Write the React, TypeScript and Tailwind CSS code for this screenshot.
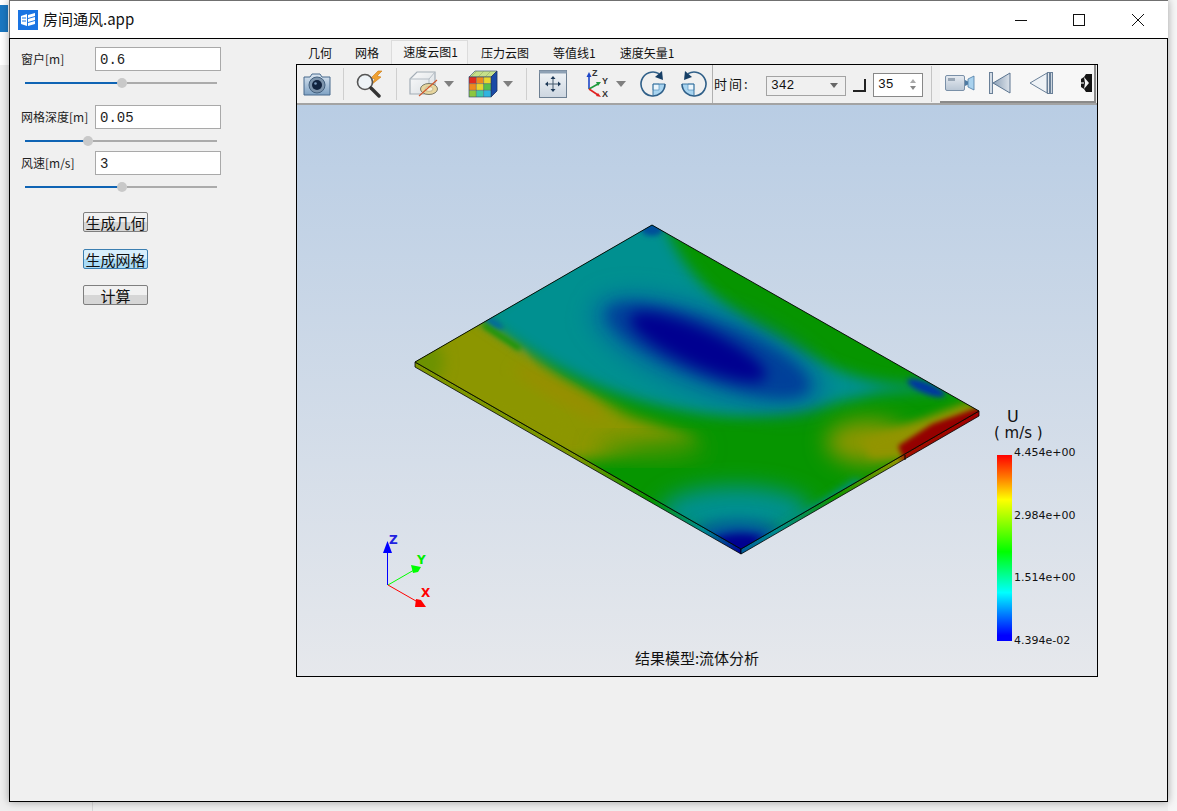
const cjk = '"Noto Sans CJK SC", "Liberation Sans", sans-serif'

function Slider({ fill, rest }: { fill: string; rest: string }) {
  return (
    <div className="ml-[15px] mt-[7px] flex h-[10px] w-[192px] items-center">
      <div className={`h-[2px] bg-[#0f64b4] ${fill}`} />
      <div className="-ml-[5px] h-[10px] w-[10px] shrink-0 rounded-full bg-[#c9c9c9]" />
      <div className={`h-[2px] bg-[#ababab] ${rest}`} />
    </div>
  )
}

function Field({ label, value }: { label: string; value: string }) {
  return (
    <div className="flex h-[24px] items-center pl-[11px]">
      <span className="w-[74px] text-[12px] leading-none whitespace-nowrap text-[#222]">{label}</span>
      <div className="flex h-[24px] w-[126px] items-center border border-[#a9a9a9] bg-white pt-[2px] pl-[4px] font-['Liberation_Mono',monospace] text-[14px] text-[#222] whitespace-pre">
        {value}
      </div>
    </div>
  )
}

function QtButton({ text, active }: { text: string; active?: boolean }) {
  return (
    <button
      className={`flex h-[20px] w-[65px] items-center justify-center rounded-[2px] border text-[15px] leading-none text-[#111] ${
        active
          ? 'border-[#3c7fb1] bg-[linear-gradient(#d8effc_50%,#a9dbf6_50%)]'
          : 'border-[#7f7f7f] bg-[linear-gradient(#f1f1f1_50%,#d6d6d6_50%)]'
      }`}
    >
      {text}
    </button>
  )
}

function Sep({ ml, mr }: { ml: string; mr: string }) {
  return <div className={`h-[32px] w-px shrink-0 bg-[#cfcfcf] ${ml} ${mr}`} />
}

function Arrow({ cls }: { cls: string }) {
  return <div className={`h-0 w-0 shrink-0 border-x-[5px] border-t-[6px] border-x-transparent border-t-[#7f7f7f] ${cls}`} />
}

function CameraIcon() {
  return (
    <svg width="30" height="26" viewBox="0 0 30 26" className="shrink-0">
      <defs>
        <linearGradient id="camBody" x1="0" y1="0" x2="0" y2="1">
          <stop offset="0" stopColor="#dbe6f1" />
          <stop offset="1" stopColor="#7fa2c4" />
        </linearGradient>
      </defs>
      <path d="M2 6h6l2-3h8l2 3h8v18H2z" fill="url(#camBody)" stroke="#47698c" />
      <circle cx="15" cy="14" r="8" fill="#7d94ac" stroke="#43607e" />
      <circle cx="15" cy="14" r="5" fill="#12243f" />
      <circle cx="13.5" cy="12.5" r="1.3" fill="#7a98bb" />
    </svg>
  )
}

function SearchBoltIcon() {
  return (
    <svg width="30" height="28" viewBox="0 0 30 28" className="shrink-0">
      <path d="M23 1l-7 7 4 1-4 6 10-8-4-1 5-5z" fill="#f0a030" stroke="#c97a14" strokeWidth="0.6" />
      <circle cx="10" cy="12" r="7.5" fill="#eef3f7" stroke="#555" strokeWidth="1.6" />
      <path d="M16 18l8 8" stroke="#333" strokeWidth="3.4" strokeLinecap="round" />
    </svg>
  )
}

function CutCubeIcon() {
  return (
    <svg width="30" height="26" viewBox="0 0 30 26" className="shrink-0">
      <defs>
        <linearGradient id="cubeFace" x1="0" y1="0" x2="1" y2="1">
          <stop offset="0" stopColor="#fbfbfb" />
          <stop offset="1" stopColor="#d8dde2" />
        </linearGradient>
      </defs>
      <path d="M1 8l7-7h18v15l-6 7H1z" fill="url(#cubeFace)" stroke="#a3adb6" strokeWidth="1.2" />
      <path d="M1 8h19v15M20 8l6-7" fill="none" stroke="#b4bcc4" />
      <ellipse cx="20" cy="18" rx="8.5" ry="5.5" fill="#e8d69e" stroke="#7a7a6a" />
      <ellipse cx="20" cy="18" rx="4" ry="2.4" fill="#f7f0d6" stroke="#a89c70" strokeWidth="0.6" />
      <path d="M10 25L28 9" stroke="#d0562a" strokeWidth="1.2" />
    </svg>
  )
}

function ColorCubeIcon() {
  return (
    <svg width="30" height="28" viewBox="0 0 30 28" className="shrink-0">
      <path d="M1 7l6-6h22l-6 6z" fill="#c6e08a" stroke="#28406c" strokeWidth="0.6" />
      <path d="M9 1l-6 6M16 1l-6 6M23 1l-6 6" stroke="#8aa05c" strokeWidth="0.5" />
      <path d="M23 7l6-6v20l-6 6z" fill="#1a4aa6" stroke="#1d3360" strokeWidth="0.8" />
      <rect x="1" y="7" width="7.3" height="6.6" fill="#e22c20" />
      <rect x="8.3" y="7" width="7.3" height="6.6" fill="#ee8a1e" />
      <rect x="15.6" y="7" width="7.4" height="6.6" fill="#e8d62e" />
      <rect x="1" y="13.6" width="7.3" height="6.7" fill="#ee8a1e" />
      <rect x="8.3" y="13.6" width="7.3" height="6.7" fill="#e8d62e" />
      <rect x="15.6" y="13.6" width="7.4" height="6.7" fill="#58c04a" />
      <rect x="1" y="20.3" width="7.3" height="6.7" fill="#8cc63f" />
      <rect x="8.3" y="20.3" width="7.3" height="6.7" fill="#3cc8a8" />
      <rect x="15.6" y="20.3" width="7.4" height="6.7" fill="#30b4e0" />
      <path d="M8.3 7v20M15.6 7v20M1 13.6h22M1 20.3h22" stroke="#40506a" strokeWidth="0.5" />
      <rect x="1" y="7" width="22" height="20" fill="none" stroke="#28406c" strokeWidth="0.6" />
    </svg>
  )
}

function MoveIcon() {
  return (
    <svg width="28" height="28" viewBox="0 0 28 28" className="shrink-0">
      <defs>
        <linearGradient id="moveBg" x1="0" y1="0" x2="0" y2="1">
          <stop offset="0" stopColor="#f2f5f8" />
          <stop offset="1" stopColor="#cdd6e0" />
        </linearGradient>
      </defs>
      <rect x="0.5" y="0.5" width="27" height="27" fill="url(#moveBg)" stroke="#6d7f92" />
      <rect x="0.5" y="0.5" width="27" height="3" fill="#8ea1b5" />
      <path d="M14 8v12M8 14h12" stroke="#44586c" strokeWidth="1" />
      <path d="M14 6l-2.5 3h5zM14 22l-2.5-3h5zM6 14l3-2.5v5zM22 14l-3-2.5v5z" fill="#1f3a58" />
    </svg>
  )
}

function AxesIcon() {
  return (
    <svg width="26" height="30" viewBox="0 0 26 30" className="shrink-0">
      <path d="M5 20V6" stroke="#1d46c8" strokeWidth="1.6" />
      <path d="M5 3l-2.5 5h5z" fill="#1d46c8" />
      <path d="M5 20l9-5" stroke="#1e9a3c" strokeWidth="1.6" />
      <path d="M17 13l-5 0 2 4z" fill="#1e9a3c" />
      <path d="M5 20l9 6" stroke="#e02020" strokeWidth="1.6" />
      <path d="M17 28l-5-1 2-3z" fill="#e02020" />
      <text x="8" y="7" fontSize="9" fontWeight="bold" fill="#333" fontFamily="Liberation Sans">Z</text>
      <text x="18" y="15" fontSize="9" fontWeight="bold" fill="#333" fontFamily="Liberation Sans">Y</text>
      <text x="18" y="28" fontSize="9" fontWeight="bold" fill="#333" fontFamily="Liberation Sans">X</text>
    </svg>
  )
}

function RotateIcon({ flip }: { flip?: boolean }) {
  return (
    <svg width="28" height="28" viewBox="0 0 28 28" className={`shrink-0 ${flip ? '-scale-x-100' : ''}`}>
      <path d="M14 14h12a12 12 0 0 1-12 12z" fill="#a8d4f0" />
      <path d="M14 14h6v6h-6z" fill="#eaf5fc" stroke="#5a92bd" strokeWidth="0.7" />
      <path d="M14 14h12M14 14v12" stroke="#2f6c99" strokeWidth="0.9" />
      <path d="M20 3.6A12 12 0 1 0 26 14" fill="none" stroke="#2f5f88" strokeWidth="1.6" />
      <path d="M23 1l1 9-8-3z" fill="#173f66" />
    </svg>
  )
}

function VideoIcon() {
  return (
    <svg width="30" height="18" viewBox="0 0 30 18" className="shrink-0">
      <defs>
        <linearGradient id="vidBody" x1="0" y1="0" x2="0" y2="1">
          <stop offset="0" stopColor="#e6ebf1" />
          <stop offset="1" stopColor="#b9c6d4" />
        </linearGradient>
      </defs>
      <rect x="0.5" y="1.5" width="19" height="15" rx="1.5" fill="url(#vidBody)" stroke="#7a90a8" />
      <rect x="3" y="4" width="7" height="3" fill="#98a6b5" />
      <path d="M20 6l3 1.5v3L20 12z" fill="#4e7ba3" />
      <path d="M23 5l6-3v14l-6-3z" fill="#a9d2ee" stroke="#4e7ba3" strokeWidth="0.8" />
    </svg>
  )
}

function FirstIcon() {
  return (
    <svg width="22" height="22" viewBox="0 0 22 22" className="shrink-0">
      <defs>
        <linearGradient id="firstFill" x1="0" y1="0" x2="1" y2="0">
          <stop offset="0" stopColor="#8ca0b6" />
          <stop offset="1" stopColor="#dbe2ea" />
        </linearGradient>
      </defs>
      <rect x="0.5" y="0.5" width="3" height="21" fill="#d4dce5" stroke="#6a8098" />
      <path d="M21 1v20L4 11z" fill="url(#firstFill)" stroke="#5c7590" />
    </svg>
  )
}

function PrevIcon() {
  return (
    <svg width="24" height="22" viewBox="0 0 24 22" className="shrink-0">
      <path d="M18 1v20L1 11z" fill="#eef2f6" stroke="#6a8098" />
      <rect x="18.5" y="0.5" width="2" height="21" fill="#e3e8ee" stroke="#6a8098" />
      <rect x="21.5" y="0.5" width="2" height="21" fill="#cdd6df" stroke="#6a8098" />
    </svg>
  )
}

function CutOffIcon() {
  return (
    <svg width="11" height="18" viewBox="0 0 11 18" className="shrink-0">
      <path d="M0 5l3-2 2-3h6v18H5l-2-3-3-2z" fill="#151515" />
      <path d="M3 3l5 6-5 6 1-6z" fill="#f4f4f4" />
      <path d="M0 8h3v2H0z" fill="#9a9a9a" />
    </svg>
  )
}

function Plate() {
  return (
    <svg viewBox="297 105 800 571" className="absolute inset-0 h-full w-full">
      <defs>
        <clipPath id="plateClip">
          <polygon points="652,225 979,411 741,549 415,362" />
        </clipPath>
        <filter id="b2" x="-50%" y="-50%" width="200%" height="200%"><feGaussianBlur stdDeviation="2.5" /></filter>
        <filter id="b4" x="-50%" y="-50%" width="200%" height="200%"><feGaussianBlur stdDeviation="4" /></filter>
        <filter id="b7" x="-50%" y="-50%" width="200%" height="200%"><feGaussianBlur stdDeviation="7" /></filter>
        <filter id="b11" x="-50%" y="-50%" width="200%" height="200%"><feGaussianBlur stdDeviation="11" /></filter>
        <linearGradient id="sideLeft" gradientUnits="userSpaceOnUse" x1="415" y1="367" x2="741" y2="554">
          <stop offset="0" stopColor="#7f9600" />
          <stop offset="0.5" stopColor="#7a9600" />
          <stop offset="0.72" stopColor="#089400" />
          <stop offset="0.88" stopColor="#008c90" />
          <stop offset="1" stopColor="#000098" />
        </linearGradient>
        <linearGradient id="sideRight" gradientUnits="userSpaceOnUse" x1="741" y1="554" x2="979" y2="416">
          <stop offset="0" stopColor="#005a9a" />
          <stop offset="0.15" stopColor="#008c90" />
          <stop offset="0.4" stopColor="#109400" />
          <stop offset="0.66" stopColor="#8c9600" />
          <stop offset="0.7" stopColor="#a01000" />
          <stop offset="1" stopColor="#a00000" />
        </linearGradient>
      </defs>

      {/* thin side of the slab */}
      <polygon points="415,362 415,367 741,554 741,549" fill="url(#sideLeft)" stroke="#000" strokeWidth="0.8" />
      <polygon points="741,549 741,554 979,416 979,411" fill="url(#sideRight)" stroke="#000" strokeWidth="0.8" />

      {/* velocity field on the top face */}
      <g clipPath="url(#plateClip)">
        <rect x="400" y="215" width="600" height="345" fill="#069500" />
        <path d="M690,232 L830,315" stroke="#4a9400" strokeWidth="6" filter="url(#b4)" />
        <polygon points="400,350 486,316 560,376 630,416 700,440 640,448 600,458 570,462 400,385" fill="#8c9600" filter="url(#b7)" />
        <polygon points="405,362 486,322 525,350 575,440 470,395" fill="#8c9600" filter="url(#b2)" />
        <ellipse cx="650" cy="448" rx="55" ry="10" fill="#4c9400" filter="url(#b11)" />
        <circle cx="420" cy="362" r="24" fill="#6c9200" filter="url(#b7)" />
        <ellipse cx="560" cy="392" rx="52" ry="8" transform="rotate(30 560 392)" fill="#988e00" filter="url(#b7)" />
        <path
          d="M478,316 C540,360 600,398 690,412 C760,424 830,404 880,393 L965,388 L925,382 C880,392 820,366 762,332 C722,306 680,270 666,226 L640,212 Z"
          fill="#009090"
          filter="url(#b7)"
        />
        <ellipse cx="708" cy="351" rx="124" ry="42" transform="rotate(20 708 351)" fill="#00709c" filter="url(#b11)" />
        <ellipse cx="708" cy="350" rx="108" ry="30" transform="rotate(21 708 350)" fill="#00409a" filter="url(#b7)" />
        <ellipse cx="698" cy="347" rx="74" ry="19" transform="rotate(24 698 347)" fill="#000090" filter="url(#b7)" />
        <ellipse cx="736" cy="512" rx="76" ry="26" fill="#009090" filter="url(#b11)" />
        <ellipse cx="738" cy="538" rx="48" ry="18" fill="#005a9c" filter="url(#b7)" />
        <ellipse cx="741" cy="545" rx="32" ry="12" fill="#000090" filter="url(#b4)" />
        <path d="M760,548 L860,482" stroke="#009090" strokeWidth="10" filter="url(#b4)" />
        <ellipse cx="868" cy="442" rx="42" ry="22" fill="#8c9600" filter="url(#b11)" />
        <polygon points="862,440 925,418 968,402 985,411 905,458 870,458" fill="#929400" filter="url(#b4)" />
        <polygon points="898,446 932,424 985,405 985,415 905,462" fill="#940000" filter="url(#b2)" />
        <ellipse cx="652" cy="229" rx="11" ry="7" fill="#00509a" filter="url(#b2)" />
        <ellipse cx="494" cy="323" rx="11" ry="3.5" transform="rotate(30 494 323)" fill="#0068a0" filter="url(#b2)" />
        <path d="M483,325 L520,349" stroke="#069500" strokeWidth="4" filter="url(#b2)" />
        <ellipse cx="926" cy="388" rx="20" ry="5.5" transform="rotate(22 926 388)" fill="#0038a0" filter="url(#b2)" />
      </g>
      <polygon points="652,225 979,411 741,549 415,362" fill="none" stroke="#000" strokeWidth="0.9" />
      <path d="M905,455v5" stroke="#000" />

      {/* triad */}
      <path d="M387.5 585V550" stroke="#0000ff" strokeWidth="1" />
      <path d="M387.5 541l-4.5 12h9z" fill="#0000ff" />
      <path d="M388 585l26-15" stroke="#00ff00" />
      <path d="M421 567l-10-2 2 8 5-1z" fill="#00ff00" />
      <path d="M388 585l28 16" stroke="#ff0000" />
      <path d="M426 607l-11 0 1-8 5 1z" fill="#ff0000" />
      <text x="389" y="544" fontSize="12" fontWeight="bold" fill="#2222e0" fontFamily="DejaVu Sans">Z</text>
      <text x="417" y="564" fontSize="12" fontWeight="bold" fill="#00ee00" fontFamily="DejaVu Sans">Y</text>
      <text x="421" y="597" fontSize="12" fontWeight="bold" fill="#ff0000" fontFamily="DejaVu Sans">X</text>
    </svg>
  )
}

function Legend() {
  return (
    <div className="absolute top-[303px] left-[693px] w-[90px] font-['DejaVu_Sans',sans-serif] text-[#111]">
      <div className="pl-[17px] text-[16px] leading-[17px] font-medium">U</div>
      <div className="pl-[4px] text-[15px] leading-[17px] whitespace-nowrap">( m/s )</div>
      <div className="mt-[13px] flex h-[186px] items-stretch">
        <div className="ml-[7px] w-[15px] bg-[linear-gradient(#ff0000_0%,#ff7a00_12%,#ffff00_24%,#00ff00_52%,#00ffff_74%,#0078ff_86%,#0000ff_97%)]" />
        <div className="-mt-[10px] -mb-[8px] flex flex-col justify-between pl-[2px] text-[11px] leading-[16px]">
          <span>4.454e+00</span>
          <span>2.984e+00</span>
          <span>1.514e+00</span>
          <span>4.394e-02</span>
        </div>
      </div>
    </div>
  )
}

export default function App() {
  return (
    <div
      className="relative h-[811px] w-[1177px] overflow-hidden bg-[#efefef]"
      style={{ fontFamily: cjk }}
    >
      {/* app behind the window */}
      <div className="absolute top-0 left-0 h-[65px] w-[10px] bg-white">
        <div className="mt-[5px] h-[27px] w-[8px] bg-[#1b78c2]" />
      </div>
      <div className="absolute top-[800px] left-[92px] h-[11px] w-px bg-[#d8d8d8]" />
      <div className="absolute top-0 left-[1168px] h-[811px] w-[9px] bg-[#f6f6f6]" />

      <div className="relative ml-[9px] flex h-[802px] w-[1159px] flex-col shadow-[0_0_8px_rgba(0,0,0,0.35)]">
        {/* title bar */}
        <div className="flex h-[38px] shrink-0 items-center border-t border-l border-[#707070] bg-white">
          <svg width="20" height="20" viewBox="0 0 20 20" className="ml-[8px] shrink-0">
            <rect width="20" height="20" fill="#1a74e2" />
            <path d="M3 6l6-2v12l-6-2zM10 5l7-2v3l-7 2zM10 9l7-2v3l-7 2zM10 13l7-2v3l-7 2z" fill="#fff" />
            <path d="M4 8h4M4 11h4" stroke="#1a74e2" />
          </svg>
          <span className="ml-[5px] text-[15px] text-[#111]">房间通风.app</span>
          <div className="ml-auto flex items-center">
            <svg width="12" height="12" viewBox="0 0 12 12" className="mr-[46px]"><path d="M0 6.5h12" stroke="#111" /></svg>
            <svg width="12" height="12" viewBox="0 0 12 12" className="mr-[47px]"><rect x="0.5" y="0.5" width="11" height="11" fill="none" stroke="#111" /></svg>
            <svg width="12" height="12" viewBox="0 0 12 12" className="mr-[24px]"><path d="M0 0l12 12M12 0L0 12" stroke="#111" /></svg>
          </div>
        </div>

        {/* body */}
        <div className="flex min-h-0 flex-1 border border-black bg-[#f0f0f0]">
          <div className="w-[286px] shrink-0 pt-[8px]">
            <Field label="窗户[m]" value="0.6" />
            <Slider fill="w-[97px]" rest="flex-1" />
            <div className="h-[17px]" />
            <Field label="网格深度[m]" value="0.05" />
            <Slider fill="w-[63px]" rest="flex-1" />
            <div className="h-[5px]" />
            <Field label="风速[m/s]" value="3" />
            <Slider fill="w-[97px]" rest="flex-1" />
            <div className="mt-[20px] flex flex-col pl-[73px]">
              <QtButton text="生成几何" />
              <div className="h-[17px]" />
              <QtButton text="生成网格" active />
              <div className="h-[16px]" />
              <QtButton text="计算" />
            </div>
          </div>

          <div className="flex w-[802px] shrink-0 flex-col">
            {/* tabs */}
            <div className="flex h-[25px] shrink-0 items-end text-[12px] leading-none text-[#111]">
              <span className="mb-[5px] ml-[12px]">几何</span>
              <span className="mb-[5px] ml-[23px]">网格</span>
              <span className="ml-[12px] flex h-[24px] w-[77px] items-center justify-center border-x border-t border-[#dcdcdc] bg-[#f4f4f4] pb-[1px] pl-[2px]">速度云图1</span>
              <span className="mb-[5px] ml-[13px]">压力云图</span>
              <span className="mb-[5px] ml-[24px]">等值线1</span>
              <span className="mb-[5px] ml-[24px]">速度矢量1</span>
            </div>

            {/* view frame */}
            <div className="flex h-[613px] flex-col border border-black">
              <div className="flex h-[40px] shrink-0 items-center overflow-hidden border-b-2 border-[#a3a3a3] bg-[#f0f0f0] text-[#111]">
                <div className="ml-[5px] flex items-center">
                  <CameraIcon />
                </div>
                <Sep ml="ml-[11px]" mr="mr-[11px]" />
                <SearchBoltIcon />
                <Sep ml="ml-[11px]" mr="mr-[12px]" />
                <CutCubeIcon />
                <Arrow cls="ml-[5px]" />
                <div className="ml-[14px]"><ColorCubeIcon /></div>
                <Arrow cls="ml-[5px]" />
                <Sep ml="ml-[13px]" mr="mr-[12px]" />
                <MoveIcon />
                <div className="ml-[17px]"><AxesIcon /></div>
                <Arrow cls="ml-[6px]" />
                <div className="ml-[13px]"><RotateIcon /></div>
                <div className="ml-[13px]"><RotateIcon flip /></div>
                <div className="ml-[4px] h-[38px] w-px shrink-0 bg-[#b0b0b0]" />
                <span className="ml-[1px] w-[39px] shrink-0 text-[13px] tracking-[2px]">时间:</span>
                <div className="mt-[3px] ml-[13px] flex h-[20px] w-[80px] shrink-0 items-center justify-between border border-[#a3a3a3] bg-[#f0f0f0] px-[4px] font-['Liberation_Mono',monospace] text-[13px]">
                  342
                  <div className="mr-[3px] h-0 w-0 border-x-[4px] border-t-[5px] border-x-transparent border-t-[#666]" />
                </div>
                <div className="mt-[3px] ml-[7px] h-[13px] w-[13px] shrink-0 border-r-2 border-b-2 border-[#222]" />
                <div className="mt-[1px] ml-[7px] flex h-[24px] w-[50px] shrink-0 items-center justify-between border border-[#888] bg-white px-[4px] font-['Liberation_Mono',monospace] text-[13px]">
                  35
                  <div className="mr-[2px] flex flex-col gap-[3px]">
                    <div className="h-0 w-0 border-x-[3px] border-b-[4px] border-x-transparent border-b-[#aaa]" />
                    <div className="h-0 w-0 border-x-[3px] border-t-[4px] border-x-transparent border-t-[#888]" />
                  </div>
                </div>
                <div className="ml-[8px] h-[36px] w-px shrink-0 bg-[#c4c4c4]" />
                <div className="ml-[8px] flex h-[38px] w-[156px] shrink-0 items-center border-r-2 border-b-2 border-[#8a8a8a] bg-[#f7f7f7]">
                  <div className="ml-[5px]"><VideoIcon /></div>
                  <div className="ml-[14px]"><FirstIcon /></div>
                  <div className="ml-[18px]"><PrevIcon /></div>
                  <div className="ml-[28px]"><CutOffIcon /></div>
                </div>
              </div>

              <div className="relative flex-1 bg-[linear-gradient(#b9cde4,#e6e8ec)]">
                <Plate />
                <Legend />
                <div className="absolute inset-x-0 bottom-[11px] text-center text-[15px] leading-none text-[#111]">
                  结果模型:流体分析
                </div>
              </div>
            </div>
          </div>
        </div>
      </div>
    </div>
  )
}
